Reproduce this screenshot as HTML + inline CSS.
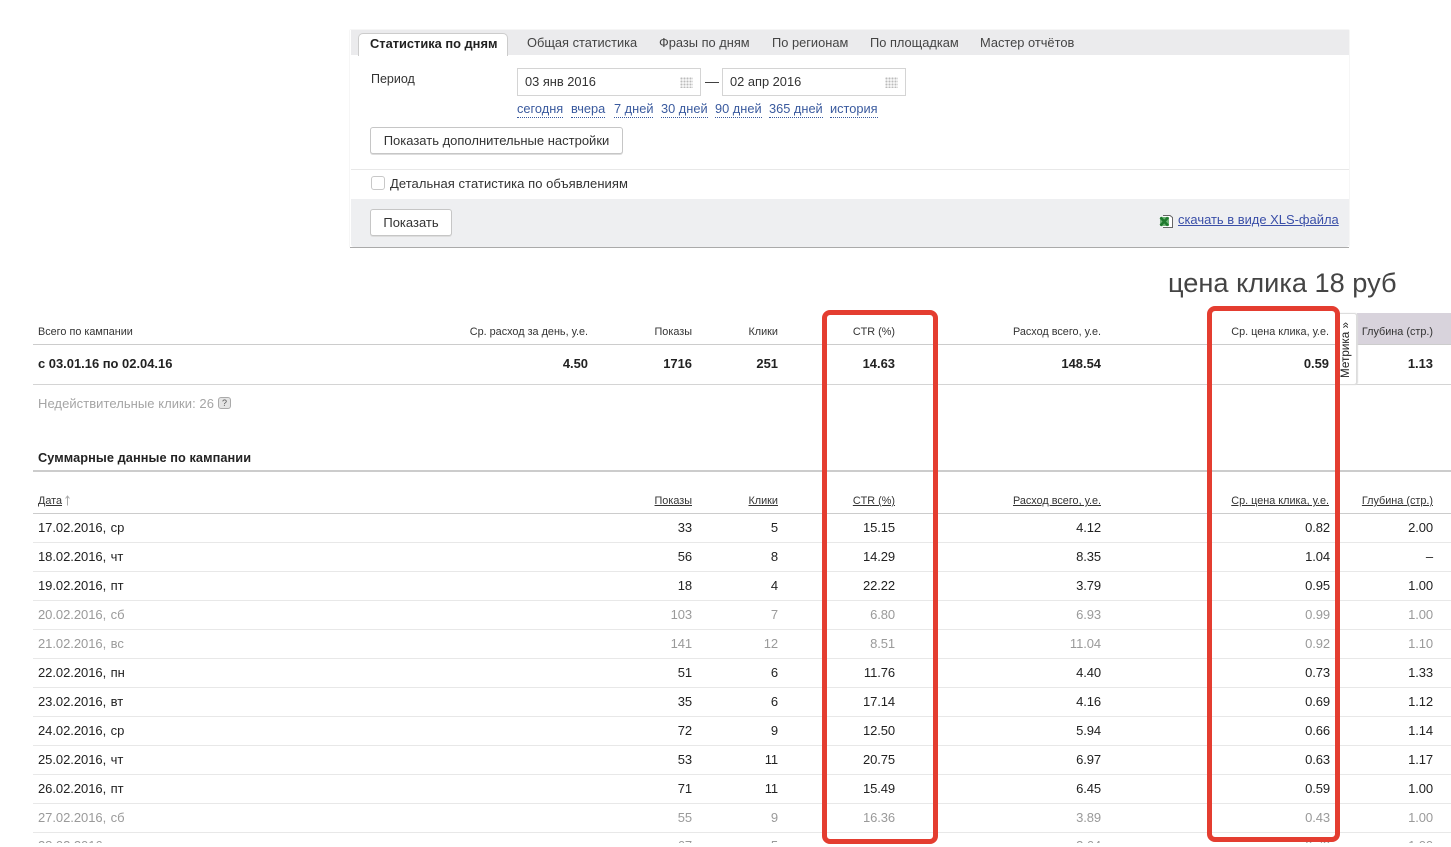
<!DOCTYPE html>
<html><head><meta charset="utf-8">
<style>
html,body{margin:0;padding:0;background:#fff}
#p{position:relative;width:1451px;height:847px;overflow:hidden;font:13px/16px "Liberation Sans",Arial,sans-serif;color:#222}
#p div,#p span.a,#p a{position:absolute}
.t{white-space:nowrap}
.tab{top:35px;color:#444;font-size:12.85px;white-space:nowrap}
.lnk{top:101px;color:#3a5a9e;font-size:12.8px;line-height:16px;border-bottom:1px dotted #3a5a9e;white-space:nowrap}
.inp{top:68px;height:26px;width:182px;border:1px solid #d4d4d4;background:#fff;color:#333;font-size:12.85px;line-height:26px;text-indent:7px;box-sizing:content-box}
.btn{background:#fff;border:1px solid #c6c6c6;border-radius:3px;box-shadow:0 1px 0 #ddd;color:#333;font-size:13px;text-align:center;box-sizing:border-box}
.g{top:8px;right:7px;width:13px;height:11px;background-image:radial-gradient(#bbb 1px,transparent 1.2px);background-size:3px 3px}
.h{font-size:10.85px;line-height:14px;color:#333;white-space:nowrap;text-align:right}
.h.u{text-decoration:underline}
.b{font-weight:bold;font-size:12.95px}
.r{left:33px;width:1418px;height:29px;border-bottom:1px solid #e8e8e8;box-sizing:content-box}
.r.w{color:#9a9a9a}
.r span{position:absolute;top:7px;line-height:16px;white-space:nowrap;font-size:13px;letter-spacing:-.1px}
.r .d{left:5px;letter-spacing:-.05px;word-spacing:1px}
.r.l span{top:6px}
.r .c1{right:759px}.r .c2{right:673px}.r .c3{right:556px}.r .c4{right:350px}.r .c5{right:121px}.r .c6{right:18px}
.rb{border:5px solid #e43d30;border-radius:8px;box-sizing:border-box;z-index:5}
</style></head><body><div id="p">

<div style="left:350px;top:30px;width:999px;height:217px;background:#fff;box-shadow:0 1px 0 #aaa,0 0 1px #ccc"></div>
<div style="left:351px;top:30px;width:998px;height:25px;background:#ebebed"></div>
<div style="left:358px;top:33px;width:150px;height:23px;background:#fff;border:1px solid #ccc;border-bottom:0;border-radius:5px 5px 0 0;box-sizing:border-box"></div>
<div class="t" style="left:370px;top:36px;color:#222;font-weight:bold;font-size:12.85px">Статистика по дням</div>
<div class="tab" style="left:527px">Общая статистика</div>
<div class="tab" style="left:659px">Фразы по дням</div>
<div class="tab" style="left:772px">По регионам</div>
<div class="tab" style="left:870px">По площадкам</div>
<div class="tab" style="left:980px">Мастер отчётов</div>

<div class="t" style="left:371px;top:71px;color:#333;font-size:12.5px">Период</div>
<div class="inp" style="left:517px">03 янв 2016<div class="g"></div></div>
<div class="t" style="left:705px;top:73px;color:#333;font-size:14px">—</div>
<div class="inp" style="left:722px">02 апр 2016<div class="g"></div></div>

<a class="lnk" style="left:517px">сегодня</a>
<a class="lnk" style="left:571px">вчера</a>
<a class="lnk" style="left:614px">7 дней</a>
<a class="lnk" style="left:661px">30 дней</a>
<a class="lnk" style="left:715px">90 дней</a>
<a class="lnk" style="left:769px">365 дней</a>
<a class="lnk" style="left:830px">история</a>

<div class="btn" style="left:370px;top:127px;width:253px;height:27px;line-height:26px">Показать дополнительные настройки</div>
<div style="left:351px;top:169px;width:998px;height:1px;background:#e8e8e8"></div>
<div style="left:371px;top:176px;width:14px;height:14px;border:1px solid #c8c8c8;border-radius:3px;box-sizing:border-box;background:#fff"></div>
<div class="t" style="left:390px;top:176px;font-size:13px;letter-spacing:.05px;color:#333">Детальная статистика по объявлениям</div>
<div style="left:351px;top:199px;width:998px;height:48px;background:#eeeff1;border-radius:0 0 3px 3px"></div>
<div class="btn" style="left:370px;top:209px;width:82px;height:27px;line-height:26px">Показать</div>

<svg style="position:absolute;left:1159px;top:214px" width="15" height="15" viewBox="0 0 15 15">
<path d="M4 1.500h7l2.500 2V13.500H4" fill="#fff" stroke="#666" stroke-width="1"/>
<rect x="1" y="3" width="9" height="9" fill="#6fb377"/>
<path d="M1.500 3.500L9 11.500M9 3.500L1.500 11.500" fill="none" stroke="#1f7a2e" stroke-width="2.600"/>
</svg>
<a class="t" style="left:1178px;top:212px;color:#3a4fa8;text-decoration:underline;font-size:12.95px">скачать в виде XLS-файла</a>

<div class="t" style="left:1168px;top:266px;font-size:27.2px;line-height:34px;color:#444">цена клика 18 руб</div>

<!-- total block -->
<div style="left:1357px;top:313px;width:94px;height:32px;background:#d8d3dc"></div>
<div style="left:33px;top:344px;width:1418px;height:1px;background:#ccc"></div>
<div style="left:33px;top:384px;width:1418px;height:1px;background:#d4d4d4"></div>
<div class="h" style="left:38px;top:325px">Всего по кампании</div>
<div class="h" style="right:863px;top:325px">Ср. расход за день, у.е.</div>
<div class="h" style="right:759px;top:325px">Показы</div>
<div class="h" style="right:673px;top:325px">Клики</div>
<div class="h" style="right:556px;top:325px">CTR (%)</div>
<div class="h" style="right:350px;top:325px">Расход всего, у.е.</div>
<div class="h" style="right:122px;top:325px">Ср. цена клика, у.е.</div>
<div class="h" style="right:18px;top:325px">Глубина (стр.)</div>

<div class="t b" style="left:38px;top:356px;color:#222">с 03.01.16 по 02.04.16</div>
<div class="t b" style="right:863px;top:356px">4.50</div>
<div class="t b" style="right:759px;top:356px">1716</div>
<div class="t b" style="right:673px;top:356px">251</div>
<div class="t b" style="right:556px;top:356px">14.63</div>
<div class="t b" style="right:350px;top:356px">148.54</div>
<div class="t b" style="right:122px;top:356px">0.59</div>
<div class="t b" style="right:18px;top:356px">1.13</div>

<!-- metrika tab -->
<div style="left:1337px;top:313px;width:20px;height:72px;background:#fff;border:1px solid #ddd;border-left:0;border-radius:0 3px 3px 0;box-sizing:border-box;box-shadow:1px 0 1px #ddd"></div>
<div class="t" style="left:1312px;top:343px;width:68px;height:14px;line-height:14px;font-size:11.7px;color:#222;transform:rotate(-90deg);text-align:center">Метрика »</div>

<div class="t" style="left:38px;top:396px;color:#a5a5a5;font-size:13px;letter-spacing:.05px">Недействительные клики: 26</div>
<div style="left:218px;top:397px;width:13px;height:12px;background:#e4e4e4;border:1px solid #aaa;border-radius:3px;box-sizing:border-box;font-size:9px;line-height:10px;text-align:center;color:#555">?</div>

<div class="t" style="left:38px;top:450px;font-weight:bold;font-size:12.75px;letter-spacing:.07px;color:#222">Суммарные данные по кампании</div>
<div style="left:33px;top:470px;width:1418px;height:2px;background:#ccc"></div>

<!-- table head -->
<div class="h u" style="left:38px;top:494px">Дата</div>
<svg style="position:absolute;left:64px;top:495px" width="7" height="11" viewBox="0 0 7 11"><path d="M3.500 10.500V1M1.500 3.500L3.500 1l2 2.500" fill="none" stroke="#aaa" stroke-width="1"/></svg>
<div class="h u" style="right:759px;top:494px">Показы</div>
<div class="h u" style="right:673px;top:494px">Клики</div>
<div class="h u" style="right:556px;top:494px">CTR (%)</div>
<div class="h u" style="right:350px;top:494px">Расход всего, у.е.</div>
<div class="h u" style="right:122px;top:494px">Ср. цена клика, у.е.</div>
<div class="h u" style="right:18px;top:494px">Глубина (стр.)</div>
<div style="left:33px;top:513px;width:1418px;height:1px;background:#ccc"></div>

<div class="r" style="top:513px"><span class="d">17.02.2016, ср</span><span class="c1">33</span><span class="c2">5</span><span class="c3">15.15</span><span class="c4">4.12</span><span class="c5">0.82</span><span class="c6">2.00</span></div>
<div class="r" style="top:542px"><span class="d">18.02.2016, чт</span><span class="c1">56</span><span class="c2">8</span><span class="c3">14.29</span><span class="c4">8.35</span><span class="c5">1.04</span><span class="c6">–</span></div>
<div class="r" style="top:571px"><span class="d">19.02.2016, пт</span><span class="c1">18</span><span class="c2">4</span><span class="c3">22.22</span><span class="c4">3.79</span><span class="c5">0.95</span><span class="c6">1.00</span></div>
<div class="r w" style="top:600px"><span class="d">20.02.2016, сб</span><span class="c1">103</span><span class="c2">7</span><span class="c3">6.80</span><span class="c4">6.93</span><span class="c5">0.99</span><span class="c6">1.00</span></div>
<div class="r w" style="top:629px"><span class="d">21.02.2016, вс</span><span class="c1">141</span><span class="c2">12</span><span class="c3">8.51</span><span class="c4">11.04</span><span class="c5">0.92</span><span class="c6">1.10</span></div>
<div class="r" style="top:658px"><span class="d">22.02.2016, пн</span><span class="c1">51</span><span class="c2">6</span><span class="c3">11.76</span><span class="c4">4.40</span><span class="c5">0.73</span><span class="c6">1.33</span></div>
<div class="r" style="top:687px"><span class="d">23.02.2016, вт</span><span class="c1">35</span><span class="c2">6</span><span class="c3">17.14</span><span class="c4">4.16</span><span class="c5">0.69</span><span class="c6">1.12</span></div>
<div class="r" style="top:716px"><span class="d">24.02.2016, ср</span><span class="c1">72</span><span class="c2">9</span><span class="c3">12.50</span><span class="c4">5.94</span><span class="c5">0.66</span><span class="c6">1.14</span></div>
<div class="r" style="top:745px"><span class="d">25.02.2016, чт</span><span class="c1">53</span><span class="c2">11</span><span class="c3">20.75</span><span class="c4">6.97</span><span class="c5">0.63</span><span class="c6">1.17</span></div>
<div class="r" style="top:774px"><span class="d">26.02.2016, пт</span><span class="c1">71</span><span class="c2">11</span><span class="c3">15.49</span><span class="c4">6.45</span><span class="c5">0.59</span><span class="c6">1.00</span></div>
<div class="r w" style="top:803px"><span class="d">27.02.2016, сб</span><span class="c1">55</span><span class="c2">9</span><span class="c3">16.36</span><span class="c4">3.89</span><span class="c5">0.43</span><span class="c6">1.00</span></div>
<div class="r w l" style="top:832px"><span class="d">28.02.2016, вс</span><span class="c1">67</span><span class="c2">5</span><span class="c3">7.46</span><span class="c4">3.64</span><span class="c5">0.73</span><span class="c6">1.00</span></div>

<!-- white cut-off at the bottom edge of the screenshot -->
<div style="left:0;top:843px;width:1451px;height:4px;background:#fff;z-index:4"></div>

<!-- red boxes -->
<div class="rb" style="left:822px;top:310px;width:116px;height:534px"></div>
<div class="rb" style="left:1207px;top:306px;width:133px;height:536px"></div>

</div></body></html>
